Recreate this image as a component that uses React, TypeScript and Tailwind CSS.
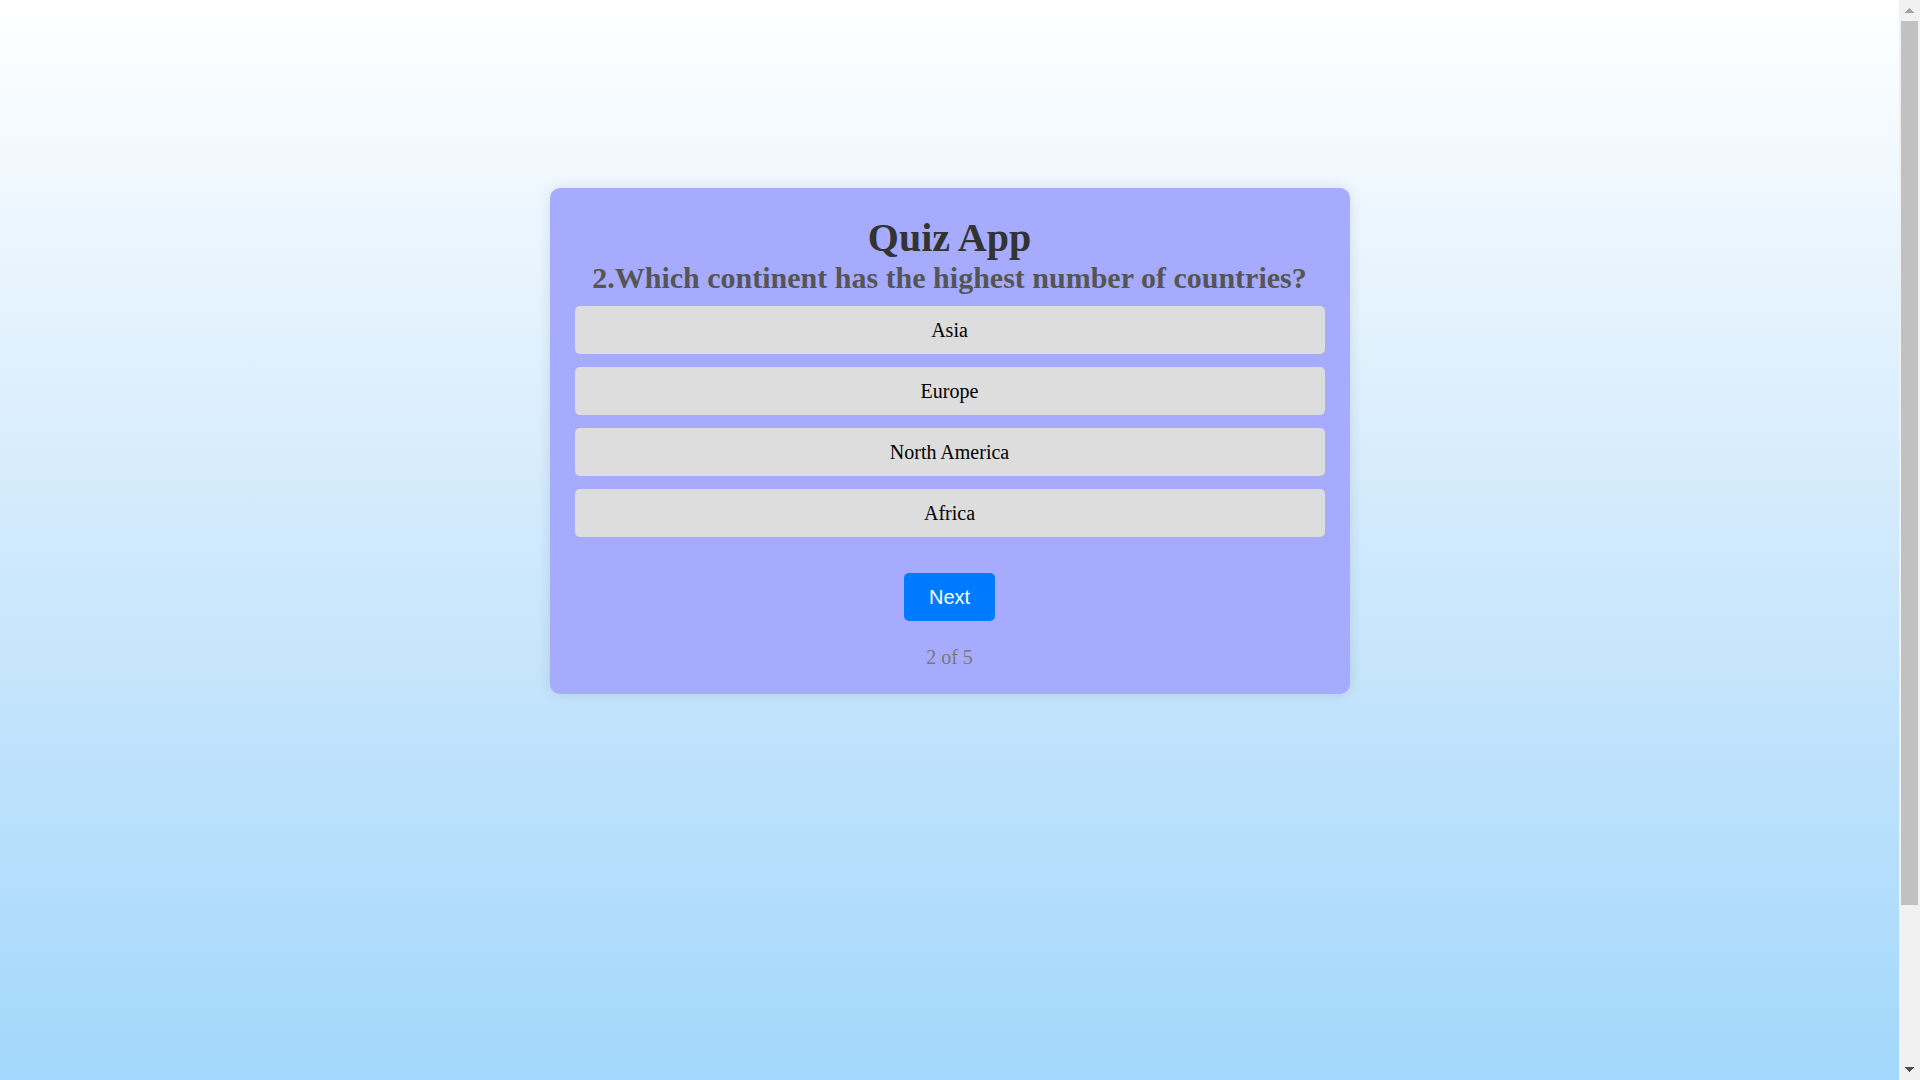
const options = ["Asia", "Europe", "North America", "Africa"];

function ScrollBar() {
  return (
    <div aria-hidden="true" className="flex w-[21px] shrink-0 flex-col items-center bg-[#f1f1f1]">
      <div className="flex h-[21px] items-center justify-center">
        <svg width="9" height="5" viewBox="0 0 9 5" fill="#a3a3a3" shapeRendering="crispEdges">
          <path d="M4 0h1v1h1v1h1v1h1v1h1v1H0V4h1V3h1V2h1V1h1z" />
        </svg>
      </div>
      <div className="flex w-full grow flex-col px-[2px]">
        <div className="h-[85.2%] bg-[#c1c1c1]" />
      </div>
      <div className="flex h-[21px] items-center justify-center">
        <svg width="9" height="5" viewBox="0 0 9 5" fill="#505050" shapeRendering="crispEdges">
          <path d="M0 0h9v1H8v1H7v1H6v1H5v1H4V4H3V3H2V2H1V1H0z" />
        </svg>
      </div>
    </div>
  );
}

export default function App() {
  return (
    <div className="flex h-screen font-['Liberation_Serif',serif]">
      <div className="min-w-0 grow bg-linear-to-b from-white via-[#d0e9fc] to-[#a2d7fb] px-4 pt-[188px]">
        <main className="mx-auto flex max-w-[800px] flex-col items-center rounded-[10px] bg-[#a7abfd] p-[25px] text-center shadow-[0_0_13px_rgba(0,0,0,0.1)]">
          <h1 className="text-[40px] leading-[50px] font-bold text-[#333]">Quiz App</h1>
          <h2 className="text-[30px] leading-[30px] font-bold text-[#555]">
            2.Which continent has the highest number of countries?
          </h2>
          <ul className="mt-[13px] flex w-full flex-col gap-[13px]">
            {options.map((option) => (
              <li key={option}>
                <button type="button" className="block h-12 w-full rounded-[5px] bg-[#ddd] text-[20px] text-black">
                  {option}
                </button>
              </li>
            ))}
          </ul>
          <button
            type="button"
            className="mt-[36px] h-12 rounded-[5px] bg-[#007bff] px-[25px] font-['Liberation_Sans',sans-serif] text-[20px] text-white"
          >
            Next
          </button>
          <p className="mt-[25px] text-[20px] leading-[23px] text-[#777]">2 of 5</p>
        </main>
      </div>
      <ScrollBar />
    </div>
  );
}
